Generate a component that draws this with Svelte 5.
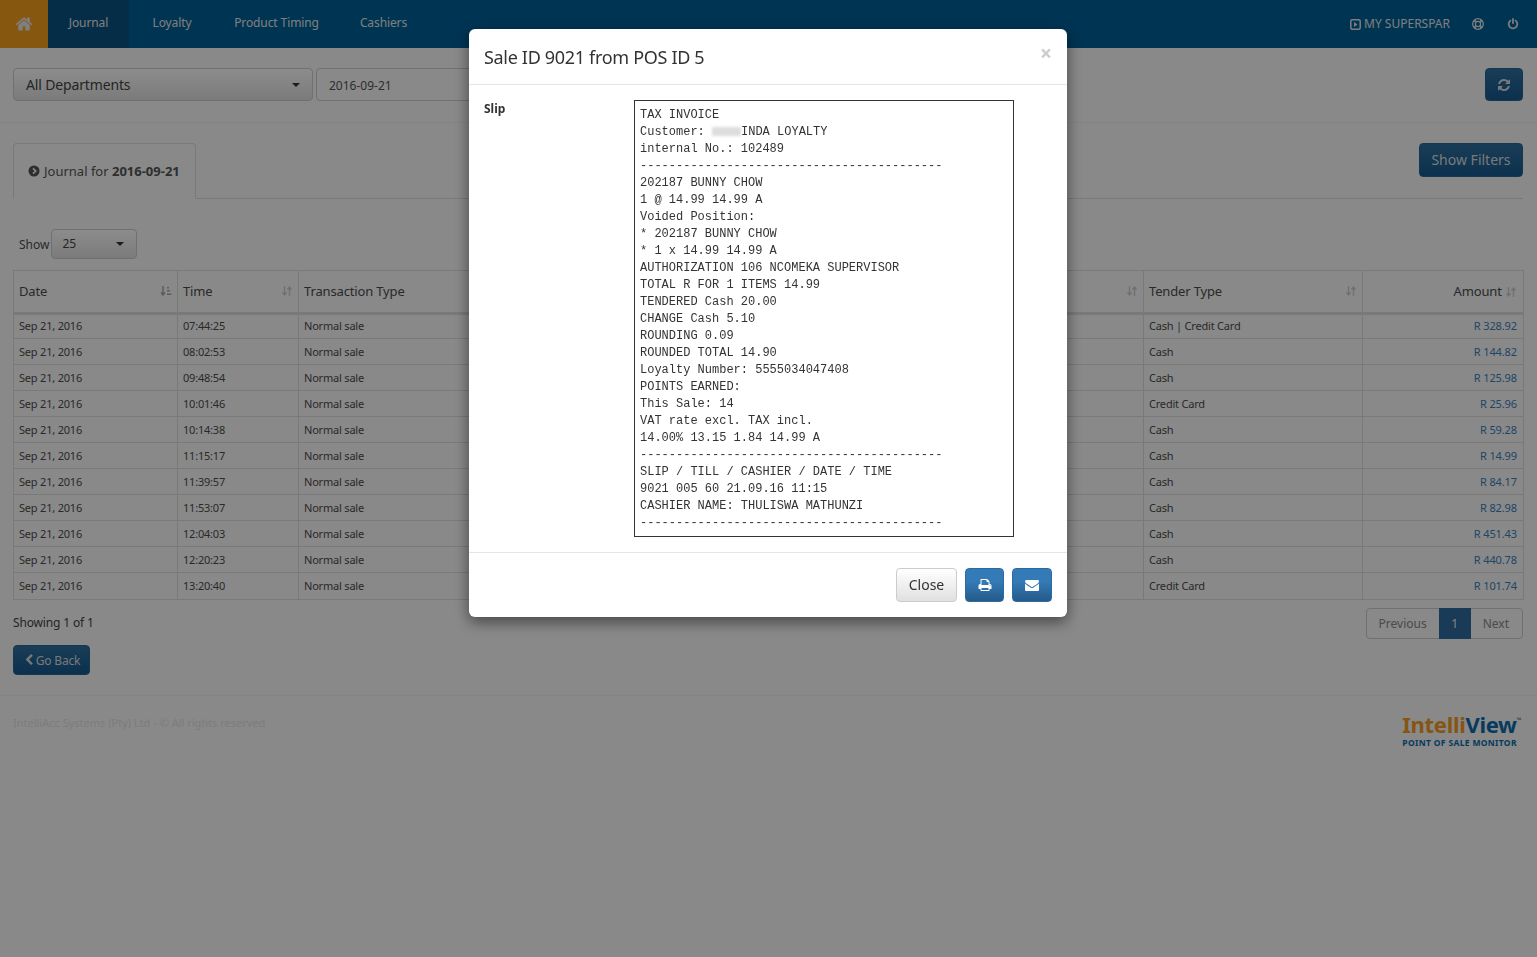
<script>
  const navTabs = [
    { label: "Journal", width: 81, active: true },
    { label: "Loyalty", width: 80 },
    { label: "Product Timing", width: 123 },
    { label: "Cashiers", width: 85 },
  ];

  const rows = [
    ["07:44:25", "Cash | Credit Card", "R 328.92"],
    ["08:02:53", "Cash", "R 144.82"],
    ["09:48:54", "Cash", "R 125.98"],
    ["10:01:46", "Credit Card", "R 25.96"],
    ["10:14:38", "Cash", "R 59.28"],
    ["11:15:17", "Cash", "R 14.99"],
    ["11:39:57", "Cash", "R 84.17"],
    ["11:53:07", "Cash", "R 82.98"],
    ["12:04:03", "Cash", "R 451.43"],
    ["12:20:23", "Cash", "R 440.78"],
    ["13:20:40", "Credit Card", "R 101.74"],
  ];

  const slipAfter = [
    "internal No.: 102489",
    "-".repeat(42),
    "202187 BUNNY CHOW",
    "1 @ 14.99 14.99 A",
    "Voided Position:",
    "* 202187 BUNNY CHOW",
    "* 1 x 14.99 14.99 A",
    "AUTHORIZATION 106 NCOMEKA SUPERVISOR",
    "TOTAL R FOR 1 ITEMS 14.99",
    "TENDERED Cash 20.00",
    "CHANGE Cash 5.10",
    "ROUNDING 0.09",
    "ROUNDED TOTAL 14.90",
    "Loyalty Number: 5555034047408",
    "POINTS EARNED:",
    "This Sale: 14",
    "VAT rate excl. TAX incl.",
    "14.00% 13.15 1.84 14.99 A",
    "-".repeat(42),
    "SLIP / TILL / CASHIER / DATE / TIME",
    "9021 005 60 21.09.16 11:15",
    "CASHIER NAME: THULISWA MATHUNZI",
    "-".repeat(42),
  ];

  const home = "M1472 992v480q0 26-19 45t-45 19h-384v-384h-256v384h-384q-26 0-45-19t-19-45v-480q0-1 .5-3t.5-3l575-474 575 474q1 2 1 6zm223-69l-62 74q-8 9-21 11h-3q-13 0-21-7l-692-577-692 577q-12 8-24 7-13-2-21-11l-62-74q-8-10-7-23.5t11-21.5l719-599q32-26 76-26t76 26l244 204v-195q0-14 9-23t23-9h192q14 0 23 9t9 23v408l219 182q10 8 11 21.5t-7 23.5z";
  const power = "M1664 896q0 156-61 298t-164 245-245 164-298 61-298-61-245-164-164-245-61-298q0-182 80.500-343t226.500-270q43-32 95.500-25t83.500 50q32 42 24.500 94.500t-49.500 84.500q-98 74-151.500 181t-53.500 228q0 104 40.500 198.500t109.500 163.500 163.500 109.500 198.500 40.500 198.500-40.500 163.500-109.500 109.500-163.500 40.500-198.500q0-121-53.500-228t-151.500-181q-42-32-49.500-84.500t24.500-94.500q31-43 84-50t95 25q146 109 226.500 270t80.500 343zm-640-768v640q0 52-38 90t-90 38-90-38-38-90v-640q0-52 38-90t90-38 90 38 38 90z";
  const refresh = "M1639 1056q0 5-1 7-64 268-268 434.500t-478 166.500q-146 0-282.500-55t-243.500-157l-129 129q-19 19-45 19t-45-19-19-45v-448q0-26 19-45t45-19h448q26 0 45 19t19 45-19 45l-137 137q71 66 161 102t187 36q134 0 250-65t186-179q11-17 53-117 8-23 30-23h192q13 0 22.500 9.500t9.500 22.500zm25-800v448q0 26-19 45t-45 19h-448q-26 0-45-19t-19-45 19-45l138-138q-148-137-349-137-134 0-250 65t-186 179q-11 17-53 117-8 23-30 23h-199q-13 0-22.500-9.500t-9.500-22.500v-7q65-268 270-434.500t480-166.500q146 0 284 55.500t245 156.500l130-129q19-19 45-19t45 19 19 45z";
  const print = "M448 1536h896v-256h-896v256zm0-640h896v-384h-160q-40 0-68-28t-28-68v-160h-640v640zm1152 64q0-26-19-45t-45-19-45 19-19 45 19 45 45 19 45-19 19-45zm128 0v416q0 13-9.500 22.500t-22.500 9.500h-224v160q0 40-28 68t-68 28h-960q-40 0-68-28t-28-68v-160h-224q-13 0-22.500-9.500t-9.500-22.500v-416q0-79 56.500-135.500t135.500-56.500h64v-544q0-40 28-68t68-28h672q40 0 88 20t76 48l152 152q28 28 48 76t20 88v256h64q79 0 135.500 56.500t56.500 135.500z";
  const envelope = "M1792 710v794q0 66-47 113t-113 47h-1472q-66 0-113-47t-47-113v-794q44 49 101 87 362 246 497 345 57 42 92.500 65.500t94.500 48 110 24.500h2q51 0 110-24.500t94.500-48 92.500-65.500q170-123 498-345 57-39 100-87zm0-294q0 79-49 151t-122 123q-376 261-468 325-10 7-42.500 30.500t-54 38-52 32.500-57.500 27-50 9h-2q-23 0-50-9t-57.500-27-52-32.500-54-38-42.500-30.500q-91-64-262-182.500t-205-142.500q-62-42-117-115.500t-55-136.500q0-78 41.500-130t118.500-52h1472q65 0 112.500 47t47.500 113z";
  const chevronLeft = "M1427 301l-531 531 531 531q19 19 19 45t-19 45l-166 166q-19 19-45 19t-45-19l-742-742q-19-19-19-45t19-45l742-742q19-19 45-19t45 19l166 166q19 19 19 45t-19 45z";
</script>

{#snippet fa(d, size)}
  <svg class="fa" width={size} height={size} viewBox="0 0 1792 1792" aria-hidden="true"><path {d} fill="currentColor" /></svg>
{/snippet}

{#snippet sortIcon()}
  <svg class="sort" width="12" height="12" viewBox="0 0 12 12" aria-hidden="true">
    <path d="M3.500 1v8M1.500 7.500l2 2.500 2-2.500M8.500 11V3M6.500 4.500l2-2.500 2 2.500" fill="none" stroke="currentColor" stroke-width="1.400" />
  </svg>
{/snippet}

<div class="page">
  <nav class="topnav">
    <a class="home" href="#home">{@render fa(home, 18)}</a>
    {#each navTabs as t}
      <a class="tab" class:active={t.active} href="#tab" style:width="{t.width}px">{t.label}</a>
    {/each}
    <div class="nav-right">
      <span class="store">
        <svg width="11" height="11" viewBox="0 0 11 11" aria-hidden="true">
          <rect x="0.800" y="0.800" width="9.400" height="9.400" rx="1.500" fill="none" stroke="currentColor" stroke-width="1.500" />
          <path d="M4 3l3.500 2.500L4 8z" fill="currentColor" />
        </svg>
        MY SUPERSPAR
      </span>
      <svg class="ring" width="12" height="12" viewBox="0 0 12 12" aria-hidden="true">
        <circle cx="6" cy="6" r="5.300" fill="none" stroke="currentColor" stroke-width="1.300" />
        <circle cx="6" cy="6" r="2.600" fill="none" stroke="currentColor" stroke-width="1.200" />
        <path d="M2.200 2.200l1.900 1.900M9.800 2.200L7.900 4.100M2.200 9.800l1.900-1.900M9.800 9.800L7.900 7.900" stroke="currentColor" stroke-width="2" />
      </svg>
      <span class="power">{@render fa(power, 12)}</span>
    </div>
  </nav>

  <div class="toolbar">
    <button class="select dept" type="button">All Departments<i class="caret"></i></button>
    <div class="date">2016-09-21</div>
    <button class="btn primary refresh" type="button">{@render fa(refresh, 14)}</button>
  </div>

  <main class="content">
    <div class="tabs">
      <div class="tab-pane-label">
        <svg width="12" height="12" viewBox="0 0 12 12" aria-hidden="true">
          <circle cx="6" cy="6" r="5.500" fill="currentColor" />
          <path d="M5 3.300L7.700 6 5 8.700" fill="none" stroke="#f9f9f9" stroke-width="1.700" />
        </svg>
        <span>Journal for <b>2016-09-21</b></span>
      </div>
      <button class="btn primary filters" type="button">Show Filters</button>
    </div>

    <div class="show">
      <span>Show</span>
      <button class="select size" type="button">25<i class="caret"></i></button>
    </div>

    <table>
      <colgroup>
        <col style="width:164px" />
        <col style="width:121px" />
        <col style="width:422px" />
        <col style="width:423px" />
        <col style="width:219px" />
        <col style="width:161px" />
      </colgroup>
      <thead>
        <tr>
          <th>Date
            <svg class="sort on" width="12" height="12" viewBox="0 0 12 12" aria-hidden="true">
              <path d="M3 1v8M1 7.500l2 2.500 2-2.500" fill="none" stroke="currentColor" stroke-width="1.500" />
              <path d="M7 2h2v1.500H7zM7 5h3v1.500H7zM7 8.500h4.500V10H7z" fill="currentColor" />
            </svg>
          </th>
          <th>Time {@render sortIcon()}</th>
          <th>Transaction Type {@render sortIcon()}</th>
          <th>{@render sortIcon()}</th>
          <th>Tender Type {@render sortIcon()}</th>
          <th class="amount">Amount <span class="inline-sort">{@render sortIcon()}</span></th>
        </tr>
      </thead>
      <tbody>
        {#each rows as r}
          <tr>
            <td>Sep 21, 2016</td>
            <td>{r[0]}</td>
            <td>Normal sale</td>
            <td></td>
            <td>{r[1]}</td>
            <td class="amount"><a href="#sale">{r[2]}</a></td>
          </tr>
        {/each}
      </tbody>
    </table>

    <div class="under">
      <span class="showing">Showing 1 of 1</span>
      <div class="pager">
        <span>Previous</span>
        <span class="current">1</span>
        <span class="next">Next</span>
      </div>
    </div>

    <button class="btn primary back" type="button">{@render fa(chevronLeft, 12)}Go Back</button>
  </main>

  <footer>
    <span class="copy">IntelliAcc Systems (Pty) Ltd - © All rights reserved</span>
    <div class="logo">
      <div class="logo-name"><span class="o">Intelli</span><span class="b">View</span><sup>™</sup></div>
      <div class="logo-sub">POINT OF SALE MONITOR</div>
    </div>
  </footer>
</div>

<div class="backdrop"></div>

<div class="modal">
  <div class="dialog">
    <header class="modal-head">
      <h4>Sale ID 9021 from POS ID 5</h4>
      <span class="close">×</span>
    </header>
    <div class="modal-body">
      <span class="label">Slip</span>
      <div class="slip">
        <div>TAX INVOICE</div>
        <div>Customer: <span class="blur"></span>INDA LOYALTY</div>
        {#each slipAfter as line}<div>{line}</div>{/each}
      </div>
    </div>
    <div class="modal-foot">
      <button class="btn plain" type="button">Close</button>
      <button class="btn blue" type="button">{@render fa(print, 14)}</button>
      <button class="btn blue" type="button">{@render fa(envelope, 14)}</button>
    </div>
  </div>
</div>

<style>
  :global(body) {
    margin: 0;
    background: #f9f9f9;
    font-family: "Noto Sans", "Open Sans", sans-serif;
    color: #4c4c4c;
    font-size: 12px;
  }

  .page {
    min-height: 957px;
  }

  a {
    text-decoration: none;
    color: inherit;
  }

  .fa {
    display: block;
  }

  /* top nav */
  .topnav {
    display: flex;
    gap: 3px;
    height: 48px;
    background: #005f98;
    color: #e6e6e6;
    font-size: 12px;
    line-height: 46px;
  }

  .home {
    width: 48px;
    margin-right: -3px;
    padding-right: 1px;
    box-sizing: border-box;
    display: flex;
    align-items: center;
    justify-content: center;
    background: #f59e1b;
    color: #e8e8e8;
  }

  .tab {
    text-align: center;
    letter-spacing: -0.1px;
    white-space: nowrap;
  }

  .tab.active {
    background: #0c5282;
  }

  .nav-right {
    margin-left: auto;
    display: flex;
    align-items: center;
    gap: 23px;
    padding-right: 18px;
  }

  .store {
    display: inline-flex;
    align-items: center;
    gap: 3px;
    margin-right: -1px;
  }

  /* toolbar */
  .toolbar {
    display: flex;
    align-items: flex-start;
    height: 54px;
    padding: 20px 14px 0 13px;
    border-bottom: 1px solid #efefef;
  }

  button {
    font-family: inherit;
    box-sizing: border-box;
    cursor: pointer;
  }

  .select {
    position: relative;
    text-align: left;
    border: 1px solid #ccc;
    border-radius: 4px;
    background: linear-gradient(#fff, #e0e0e0);
    color: #444;
    padding: 0 12px;
  }

  .caret {
    position: absolute;
    top: 50%;
    margin-top: -2px;
    right: 12px;
    border: 4px solid transparent;
    border-top-color: #333;
    border-bottom: 0;
  }

  .dept {
    width: 300px;
    height: 33px;
    font-size: 14px;
    letter-spacing: -0.15px;
  }

  .date {
    box-sizing: border-box;
    margin-left: 3px;
    width: 300px;
    height: 33px;
    padding: 0 12px;
    line-height: 33px;
    font-size: 12px;
    border: 1px solid #ccc;
    border-radius: 4px;
    background: #f9f9f9;
    color: #555;
  }

  .btn {
    border-radius: 4px;
    display: inline-flex;
    align-items: center;
    justify-content: center;
  }

  .primary {
    background: linear-gradient(#30709f, #14598f);
    border: 1px solid #286596;
    color: #ddd;
  }

  .refresh {
    margin-left: auto;
    width: 38px;
    height: 33px;
    padding: 0;
  }

  /* content */
  .content {
    padding: 20px 14px 0 13px;
  }

  .tabs {
    display: flex;
    justify-content: space-between;
    align-items: flex-start;
    height: 55px;
    border-bottom: 1px solid #ddd;
  }

  .tab-pane-label {
    box-sizing: border-box;
    width: 183px;
    height: 56px;
    display: flex;
    align-items: center;
    gap: 4px;
    padding: 0 0 0 14px;
    border: 1px solid #ddd;
    border-bottom-color: #f9f9f9;
    border-radius: 4px 4px 0 0;
    font-size: 13px;
    white-space: nowrap;
    color: #555;
  }

  .filters {
    width: 104px;
    height: 34px;
    padding: 0 0 2px;
    font-size: 14px;
  }

  .show {
    display: flex;
    align-items: center;
    gap: 2px;
    margin: 30px 0 11px 6px;
    height: 30px;
  }

  .size {
    width: 86px;
    height: 30px;
    font-size: 12px;
    padding: 0 10px 1px;
  }

  table {
    table-layout: fixed;
    border-collapse: collapse;
    width: 1510px;
    font-size: 11px;
  }

  th {
    position: relative;
    box-sizing: border-box;
    height: 43px;
    padding: 0 5px 1px;
    text-align: left;
    font-weight: 400;
    font-size: 13px;
    letter-spacing: -0.15px;
    border: 1px solid #ddd;
    border-bottom-width: 3px;
  }

  td {
    box-sizing: border-box;
    height: 26px;
    padding: 0 5px;
    border: 1px solid #ddd;
    letter-spacing: -0.2px;
  }

  tbody tr:first-child td {
    height: 25px;
    padding-bottom: 3px;
  }

  tbody tr:last-child td {
    height: 27px;
    padding-bottom: 1px;
  }

  td.amount {
    text-align: right;
    padding-right: 6px;
    letter-spacing: -0.1px;
  }

  th.amount {
    text-align: right;
    padding-right: 6px;
  }

  .amount a {
    color: #3a80ba;
  }

  .sort {
    position: absolute;
    right: 5px;
    top: 14px;
    color: #ccc;
  }

  .sort.on {
    color: #aaa;
  }

  .inline-sort :global(.sort) {
    position: static;
    vertical-align: -2px;
  }

  .under {
    display: flex;
    justify-content: space-between;
    align-items: flex-start;
    margin-top: 8px;
  }

  .showing {
    margin-top: 6px;
    font-size: 12px;
    letter-spacing: -0.15px;
    color: #444;
  }

  .pager {
    display: flex;
    height: 31px;
    border: 1px solid #ccc;
    box-sizing: border-box;
    border-radius: 4px;
    line-height: 29px;
    color: #888;
  }

  .pager span {
    padding: 0 12px;
  }

  .pager .next {
    padding-right: 13px;
  }

  .pager .current {
    background: #2f6c9f;
    color: #eee;
    margin: -1px 0;
    line-height: 31px;
    width: 32px;
    box-sizing: border-box;
    text-align: center;
    padding: 0;
  }

  .back {
    display: flex;
    margin-top: 6px;
    width: 77px;
    height: 30px;
    padding: 0;
    gap: 1px;
    font-size: 12px;
    letter-spacing: -0.2px;
  }

  footer {
    display: flex;
    justify-content: space-between;
    align-items: flex-start;
    margin-top: 20px;
    padding: 19px 16px 0 13px;
    border-top: 1px solid #eee;
    color: #e3e3e3;
    font-size: 11px;
  }

  .logo {
    margin-top: -2px;
  }

  .logo-name {
    font-size: 22px;
    line-height: 22px;
    font-weight: 700;
    letter-spacing: -0.3px;
    white-space: nowrap;
  }

  .logo-name sup {
    font-size: 6px;
    color: #006bab;
    vertical-align: 11px;
    line-height: 0;
  }

  .o {
    color: #f39c1f;
  }

  .b {
    color: #0b6cab;
  }

  .logo-sub {
    margin-top: 3px;
    font-size: 8.500px;
    line-height: 10px;
    font-weight: 700;
    letter-spacing: 0.35px;
    color: #0b6cab;
    white-space: nowrap;
  }

  /* modal */
  .backdrop {
    position: fixed;
    inset: 0;
    background: rgba(0, 0, 0, 0.45);
  }

  .modal {
    position: fixed;
    inset: 0;
  }

  .dialog {
    width: 598px;
    height: 588px;
    margin: 29px 0 0 469px;
    background: #fff;
    border-radius: 6px;
    box-shadow: 0 5px 15px rgba(0, 0, 0, 0.5);
    color: #333;
  }

  .modal-head {
    display: flex;
    justify-content: space-between;
    height: 56px;
    box-sizing: border-box;
    padding: 15px;
    border-bottom: 1px solid #e5e5e5;
  }

  h4 {
    margin: 0;
    font-size: 18px;
    line-height: 26px;
    font-weight: 400;
    letter-spacing: -0.32px;
  }

  .close {
    font-size: 21px;
    line-height: 18px;
    font-weight: 700;
    color: #ccc;
  }

  .modal-body {
    display: flex;
    padding: 15px;
    height: 468px;
    box-sizing: border-box;
    border-bottom: 1px solid #e5e5e5;
  }

  .label {
    width: 150px;
    font-weight: 700;
    font-size: 12px;
    line-height: 17px;
  }

  .slip {
    box-sizing: border-box;
    width: 380px;
    height: 437px;
    border: 1px solid #333;
    padding: 6px 5px 4px;
    font-family: "Liberation Mono", monospace;
    font-size: 12px;
    line-height: 17px;
    color: #333;
  }

  .slip div {
    white-space: pre;
  }

  .blur {
    display: inline-block;
    width: 29px;
    height: 9px;
    background: #ddd;
    filter: blur(1.500px);
    vertical-align: -1px;
  }

  .modal-foot {
    display: flex;
    justify-content: flex-end;
    gap: 8px;
    padding: 15px;
  }

  .plain {
    width: 61px;
    height: 34px;
    padding: 0 0 2px;
    font-size: 14px;
    color: #333;
    background: linear-gradient(#fff, #e0e0e0);
    border: 1px solid #ccc;
  }

  .blue {
    width: 39px;
    height: 34px;
    padding: 0;
    color: #fff;
    background: linear-gradient(#337ab7 40%, #265a88);
    border: 1px solid #2d6ca2;
  }

  .blue:last-child {
    width: 40px;
  }
</style>
